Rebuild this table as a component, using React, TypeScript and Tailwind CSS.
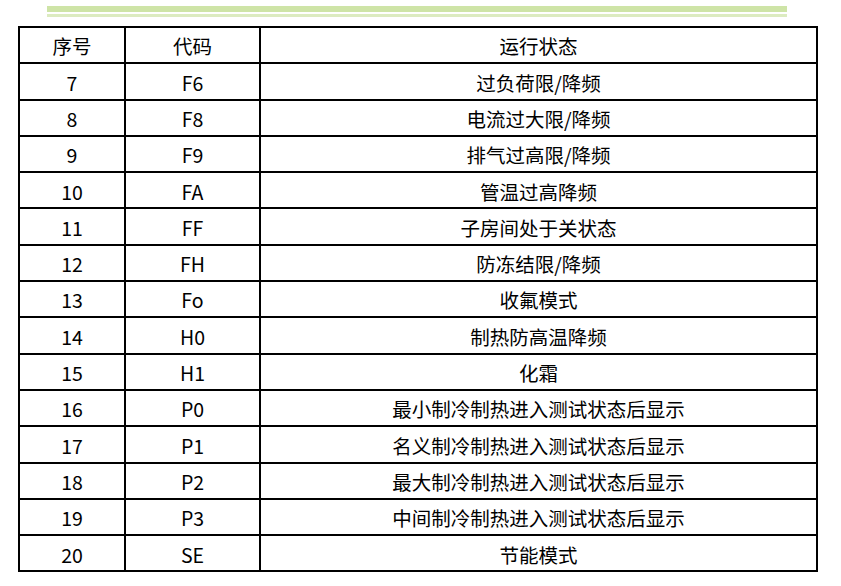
const rows: [string, string, string][] = [
  ["7", "F6", "过负荷限/降频"],
  ["8", "F8", "电流过大限/降频"],
  ["9", "F9", "排气过高限/降频"],
  ["10", "FA", "管温过高降频"],
  ["11", "FF", "子房间处于关状态"],
  ["12", "FH", "防冻结限/降频"],
  ["13", "Fo", "收氟模式"],
  ["14", "H0", "制热防高温降频"],
  ["15", "H1", "化霜"],
  ["16", "P0", "最小制冷制热进入测试状态后显示"],
  ["17", "P1", "名义制冷制热进入测试状态后显示"],
  ["18", "P2", "最大制冷制热进入测试状态后显示"],
  ["19", "P3", "中间制冷制热进入测试状态后显示"],
  ["20", "SE", "节能模式"],
]

export default function App() {
  return (
    <div className="min-h-screen bg-white pt-[6px] text-black font-['Noto_Sans_CJK_SC','Noto_Sans',sans-serif]">
      {/* header rule */}
      <div className="ml-[47px] w-[740px]">
        <div className="h-[6px] bg-[#cee4a7]" />
        <div className="mt-[2px] h-[3px] bg-[#dcebc0]" />
      </div>

      <table className="ml-[18px] mt-[9px] w-[800px] table-fixed border-collapse text-[19.5px] leading-none">
        <colgroup>
          <col className="w-[106px]" />
          <col className="w-[135px]" />
          <col />
        </colgroup>
        <thead>
          <tr className="h-[36.3px]">
            <th className="border-2 border-black pt-[2px] font-normal">序号</th>
            <th className="border-2 border-black pt-[2px] font-normal">代码</th>
            <th className="border-2 border-black pt-[2px] font-normal">运行状态</th>
          </tr>
        </thead>
        <tbody>
          {rows.map(([no, code, state]) => (
            <tr key={no} className="h-[36.3px]">
              <td className="border-2 border-black pt-[2px] text-center">{no}</td>
              <td className="border-2 border-black pt-[2px] text-center">{code}</td>
              <td className="border-2 border-black pt-[2px] text-center">{state}</td>
            </tr>
          ))}
        </tbody>
      </table>
    </div>
  )
}
